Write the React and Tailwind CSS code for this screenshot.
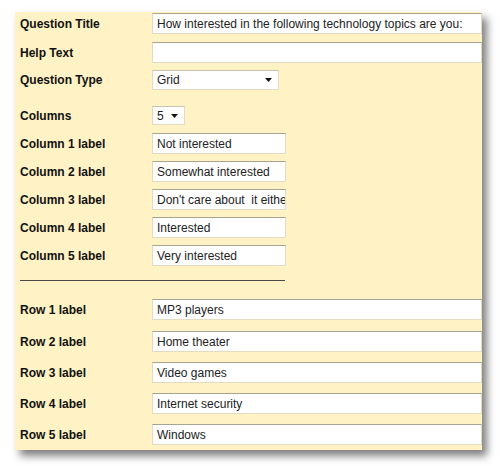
const font = { fontFamily: '"Liberation Sans", Arial, sans-serif' };

const TextBox = ({ value, width }) => {
    return (
        <div className={`h-full ${width} bg-white border border-[#e4dcc0] border-t-[#a8a290] flex items-center pl-[4px] overflow-hidden whitespace-pre text-[12px] text-[#222]`}>
            {value}
        </div>
    )
}

const Select = ({ value, width }) => {
    return (
        <div className={`h-full ${width} bg-white border border-[#e4dcc0] border-t-[#c8c2ae] flex items-center justify-between pl-[4px] pr-[6px] text-[12px] text-[#222]`}>
            <span>{value}</span>
            <svg width="7" height="4" viewBox="0 0 7 4"><path d="M0 0 H7 L3.5 4 Z" fill="#111" /></svg>
        </div>
    )
}

const Row = ({ label, mt, h, children }) => {
    return (
        <div className={`flex items-center ${mt} ${h}`}>
            <div className="w-[137px] shrink-0 pl-[5px] text-[12px] font-bold text-[#111]">{label}</div>
            {children}
        </div>
    )
}

const columns = ["Not interested", "Somewhat interested", "Don't care about  it either way", "Interested", "Very interested"]
const rows = ["MP3 players", "Home theater", "Video games", "Internet security", "Windows"]
const rowGaps = ["mt-[18px]", "mt-[11px]", "mt-[10px]", "mt-[10px]", "mt-[10px]"]

export default function App() {
    return (
        <div className="w-[500px] h-[466px] bg-white pl-[15px] pt-[12px]" style={font}>
            <div className="w-[467px] h-[438px] bg-[#fff2c5] overflow-hidden flex flex-col shadow-[5px_6px_8px_rgba(0,0,0,0.5)]">
                <Row label="Question Title" mt="mt-[1px]" h="h-[21px]">
                    <TextBox value="How interested in the following technology topics are you:" width="flex-1" />
                </Row>
                <Row label="Help Text" mt="mt-[8px]" h="h-[21px]">
                    <TextBox value="" width="flex-1" />
                </Row>
                <Row label="Question Type" mt="mt-[7px]" h="h-[20px]">
                    <Select value="Grid" width="w-[127px]" />
                </Row>
                <Row label="Columns" mt="mt-[16px]" h="h-[19px]">
                    <Select value="5" width="w-[33px]" />
                </Row>
                {columns.map((c, i) => (
                    <Row key={c} label={`Column ${i + 1} label`} mt={i === 0 ? "mt-[8px]" : "mt-[7px]"} h="h-[21px]">
                        <TextBox value={c} width="w-[134px]" />
                    </Row>
                ))}
                <div className="mt-[14px] ml-[5px] w-[265px] h-px bg-[#4a4a4a]"></div>
                {rows.map((r, i) => (
                    <Row key={r} label={`Row ${i + 1} label`} mt={rowGaps[i]} h="h-[21px]">
                        <TextBox value={r} width="flex-1" />
                    </Row>
                ))}
            </div>
        </div>
    )
}
